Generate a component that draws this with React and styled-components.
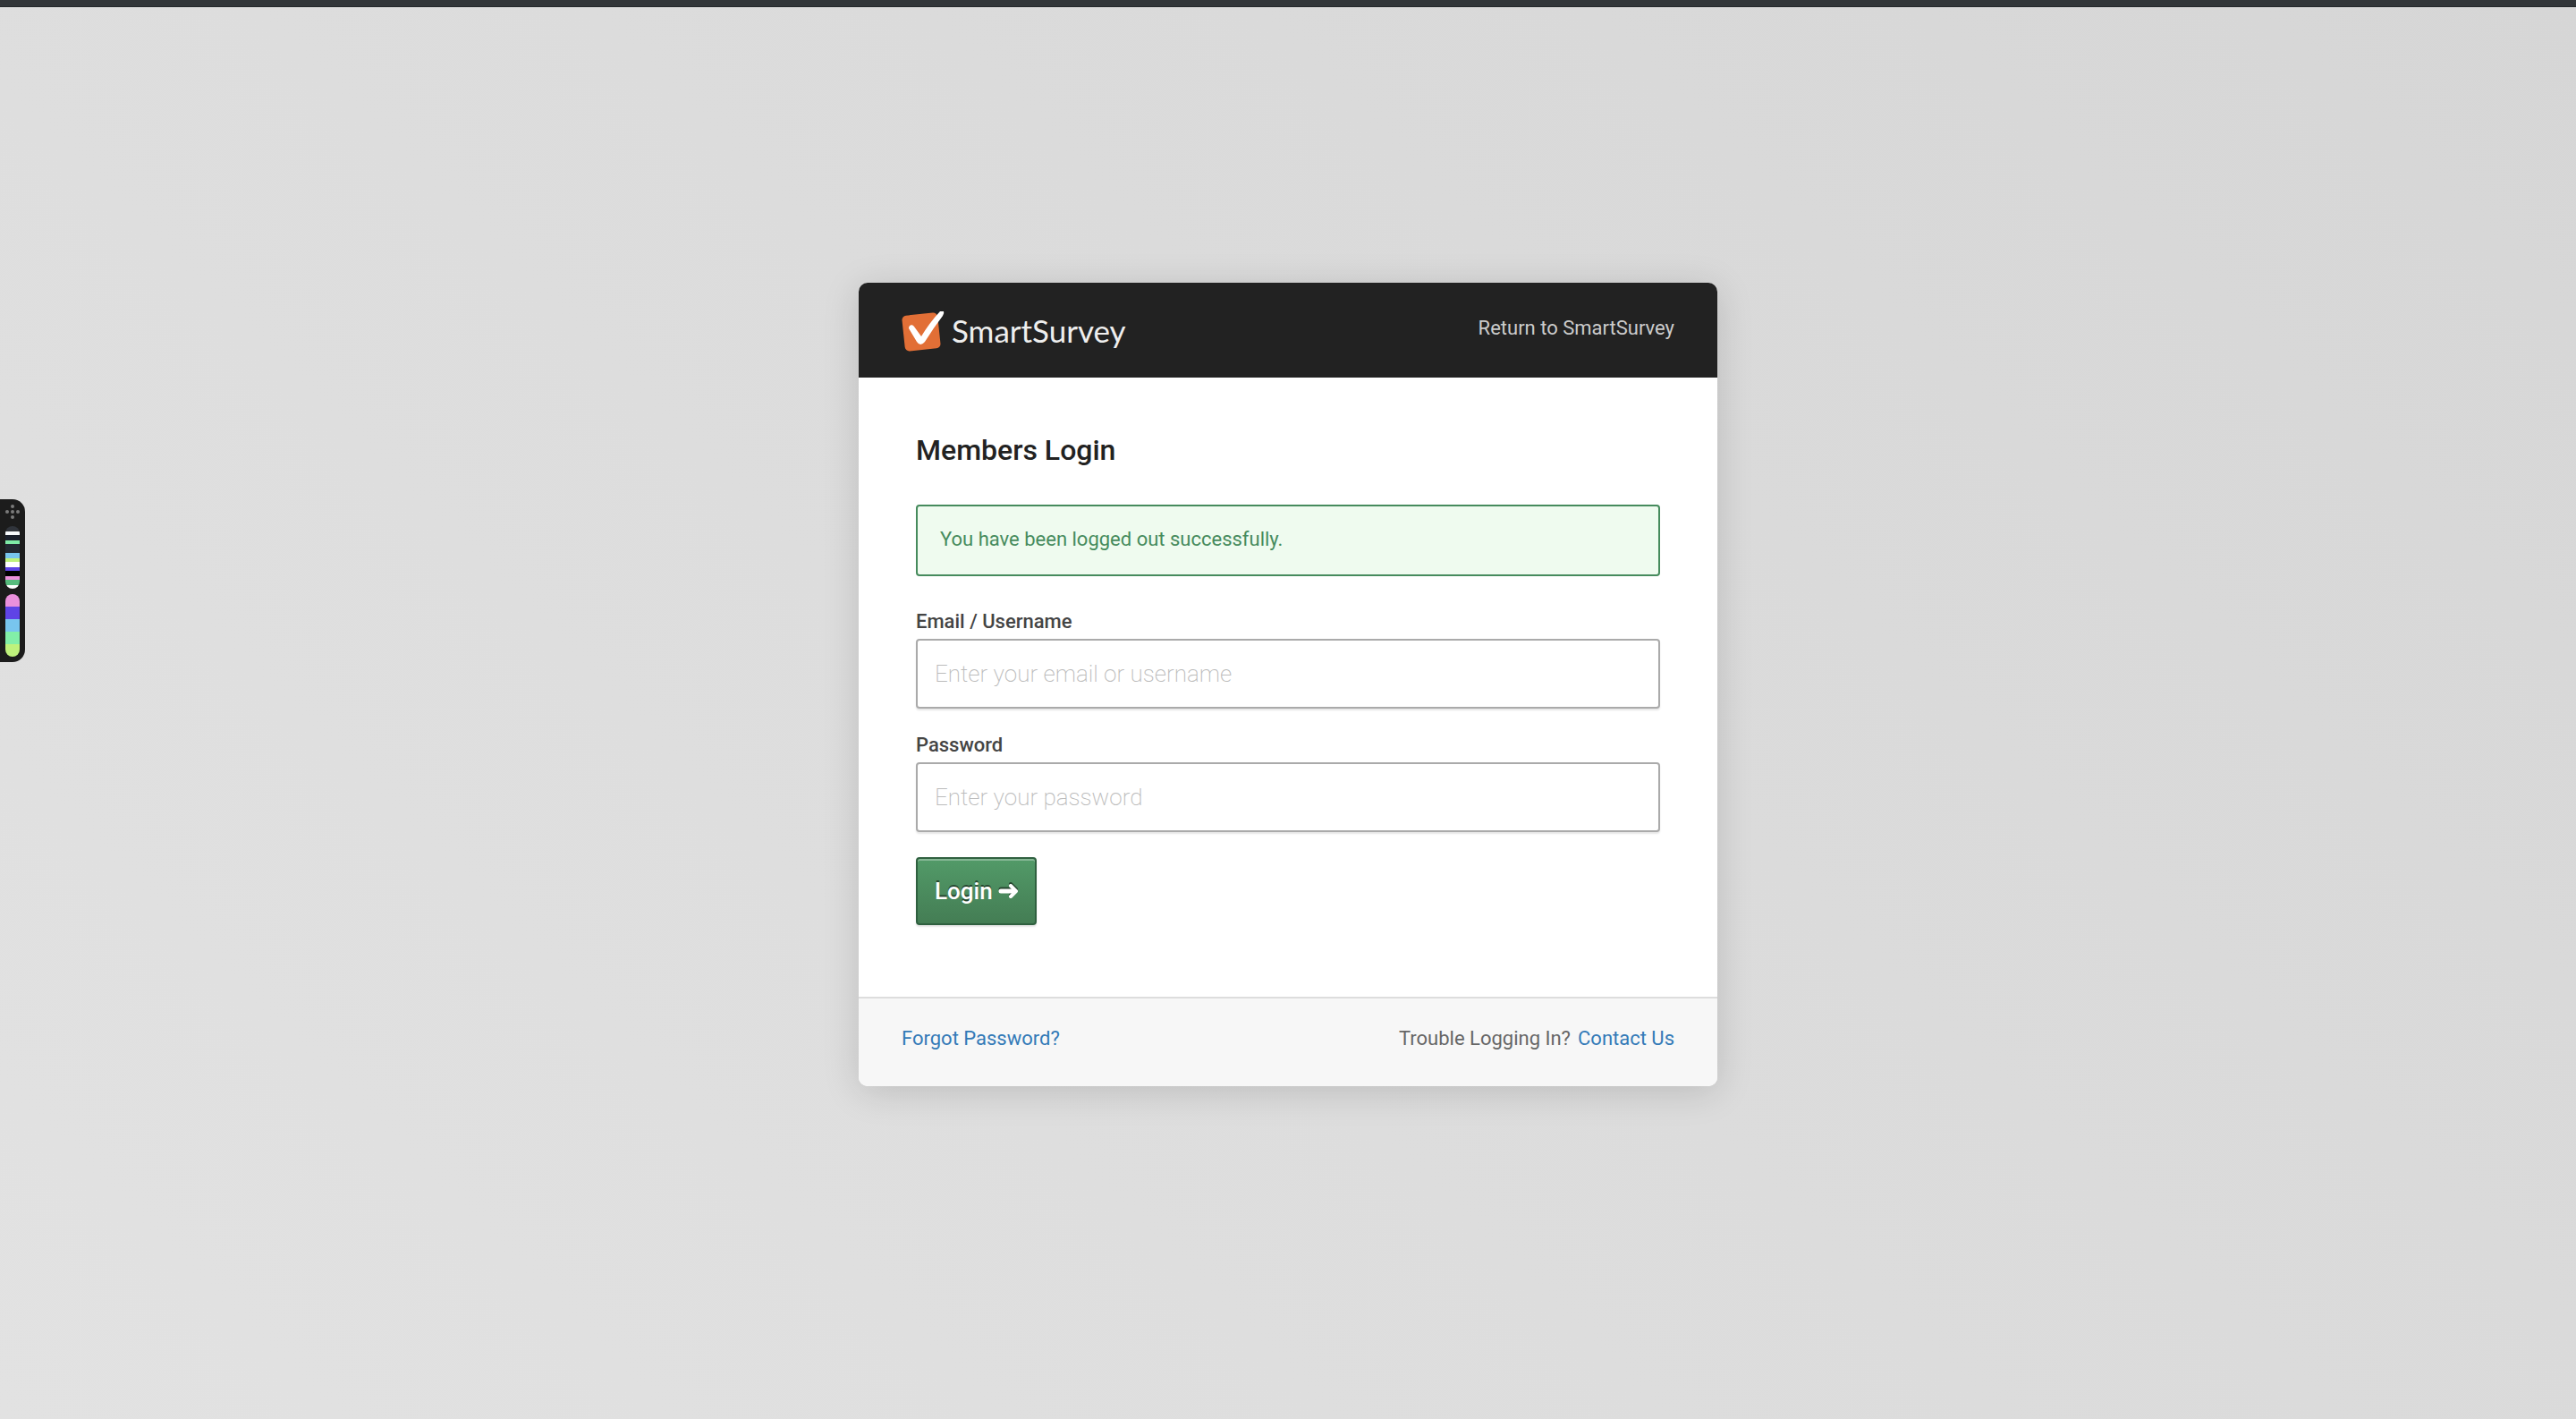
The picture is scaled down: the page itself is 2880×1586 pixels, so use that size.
import React from "react";
import styled, { createGlobalStyle } from "styled-components";

const GlobalStyle = createGlobalStyle`
  * { box-sizing: border-box; }
  body {
    margin: 0;
    font-family: Roboto, "Liberation Sans", sans-serif;
    color: #222;
    background: #ddd;
  }
`;

const Page = styled.div`
  min-height: 100vh;
  display: flex;
  flex-direction: column;
  background: linear-gradient(45deg, #e2e2e2, #d6d6d6);
`;

const TopBar = styled.div`
  height: 8px;
  background: #323639;
  border-bottom: 1px solid #24282a;
`;

const Main = styled.main`
  padding: 308px 24px 0;
`;

const Card = styled.section`
  width: 100%;
  max-width: 960px;
  margin: 0 auto;
  background: #fff;
  border-radius: 10px;
  overflow: hidden;
  box-shadow: 0 6px 40px rgba(0, 0, 0, 0.15);
`;

const Header = styled.header`
  display: flex;
  justify-content: space-between;
  align-items: flex-start;
  padding: 32px 48px 26px;
  background: #222;
`;

const LogoLink = styled.a`
  display: block;
  height: 48px;
  svg { display: block; }
`;

const ReturnLink = styled.a`
  font-size: 22px;
  line-height: 38px;
  color: #ccc;
  text-decoration: none;
`;

const Body = styled.div`
  padding: 56px 64px 80px;
`;

const Title = styled.h1`
  margin: 0 0 36px;
  font-size: 32px;
  line-height: 50px;
  font-weight: 500;
`;

const Notice = styled.p`
  margin: 0 0 32px;
  padding: 18px 25px 20px;
  border: 2px solid #468b5d;
  border-radius: 4px;
  background: #effbef;
  color: #468b5d;
  font-size: 22px;
  line-height: 38px;
`;

const Fields = styled.div`
  display: grid;
  gap: 22px;
  margin-bottom: 28px;
`;

const Field = styled.div`
  display: flex;
  flex-direction: column;
`;

const Label = styled.label`
  font-size: 22px;
  line-height: 38px;
  font-weight: 500;
  color: #444;
`;

const Input = styled.input`
  height: 78px;
  padding: 0 19px;
  border: 2px solid #aaa;
  border-radius: 4px;
  box-shadow: 0 2px 2px rgba(0, 0, 0, 0.1);
  background: #fff;
  color: #222;
  font: 200 26px Roboto, sans-serif;
  &::placeholder { color: #bbb; opacity: 1; }
`;

const LoginButton = styled.button`
  display: inline-flex;
  align-items: center;
  gap: 6px;
  height: 76px;
  padding: 0 19px;
  border: 2px solid #2f603f;
  border-radius: 4px;
  background: linear-gradient(#529a68, #447d54);
  box-shadow: inset 0 2px 0 rgba(255, 255, 255, 0.3), 0 2px 2px rgba(0, 0, 0, 0.1);
  color: #fff;
  font: 500 26px Roboto, sans-serif;
  text-shadow: 0 -2px 0 rgba(0, 0, 0, 0.5);
  svg {
    overflow: visible;
    filter: drop-shadow(0 -2px 0 rgba(0, 0, 0, 0.5));
  }
`;

const Footer = styled.footer`
  display: flex;
  justify-content: space-between;
  padding: 26px 48px 34px;
  border-top: 2px solid #ddd;
  background: #f7f7f7;
  font-size: 22px;
  line-height: 38px;
  color: #666;
`;

const Help = styled.p`
  display: flex;
  gap: 8px;
  margin: 0;
`;

const FooterLink = styled.a`
  color: #337ab7;
  text-decoration: none;
`;

const Widget = styled.aside`
  position: fixed;
  left: 0;
  top: 558px;
  width: 28px;
  display: flex;
  flex-direction: column;
  align-items: center;
  gap: 6px;
  padding: 6px 0;
  border-radius: 0 14px 14px 0;
  background: #1c1c1c;
`;

const Handle = styled.svg`
  width: 16px;
  height: 18px;
  fill: #7b7b7b;
`;

const Pill = styled.div`
  width: 16px;
  display: flex;
  flex-direction: column;
  border-radius: 8px;
  overflow: hidden;
`;

const Band = styled.span`
  height: ${(p) => p.$size}px;
  background: ${(p) => p.$color};
`;

const palette = [
  ["#30343b", 6], ["#f7fafc", 4], ["#1a202c", 6], ["#7eeaa6", 4], ["#232933", 10],
  ["#78c5ee", 6], ["#bff27c", 4], ["#ffffff", 6], ["#5f44e6", 4], ["#000000", 6],
  ["#ea90dc", 4], ["#56bb7c", 6], ["#ffffff", 4],
];
const accents = [
  ["#ea90dc", 14], ["#5f44e6", 14], ["#78c5ee", 14], ["#82efa8", 14], ["#bff27c", 14],
];

function Bands({ items }) {
  return (
    <Pill>
      {items.map(([color, size], i) => <Band key={i} $color={color} $size={size} />)}
    </Pill>
  );
}

function Logo() {
  return (
    <svg width="254" height="48" viewBox="0 0 254 48" aria-label="SmartSurvey" role="img">
      <rect x="2" y="3" width="40" height="40" rx="5" fill="#e26f36" transform="rotate(-6 22 23)" />
      <path d="M8 19C8 15 12 14 14 17L22 28Q31 13 43 0L47 0Q48 2 46 5Q36 18 26 34Q21 40 17 34Z" fill="#fff" />
      <text x="56" y="35" fill="#eee" fontFamily="Lato, sans-serif" fontSize="35">SmartSurvey</text>
    </svg>
  );
}

export default function App() {
  return (
    <Page>
      <GlobalStyle />
      <TopBar />
      <Main>
        <Card>
          <Header>
            <LogoLink href="#home"><Logo /></LogoLink>
            <ReturnLink href="#home">Return to SmartSurvey</ReturnLink>
          </Header>
          <form onSubmit={(e) => e.preventDefault()}>
            <Body>
              <Title>Members Login</Title>
              <Notice role="status">You have been logged out successfully.</Notice>
              <Fields>
                <Field>
                  <Label htmlFor="username">Email / Username</Label>
                  <Input id="username" type="text" placeholder="Enter your email or username" />
                </Field>
                <Field>
                  <Label htmlFor="password">Password</Label>
                  <Input id="password" type="password" placeholder="Enter your password" />
                </Field>
              </Fields>
              <LoginButton type="submit">
                Login
                <svg width="22" height="18" viewBox="0 0 22 18" fill="none" stroke="#fff" strokeLinecap="round" aria-hidden="true">
                  <path d="M3 9H17" strokeWidth="5" />
                  <path d="M14 3L20 9L14 15" strokeWidth="4" strokeLinejoin="round" />
                </svg>
              </LoginButton>
            </Body>
          </form>
          <Footer>
            <FooterLink href="#forgot">Forgot Password?</FooterLink>
            <Help>
              Trouble Logging In? <FooterLink href="#contact">Contact Us</FooterLink>
            </Help>
          </Footer>
        </Card>
      </Main>
      <Widget>
        <Handle viewBox="0 0 16 18" aria-hidden="true">
          <circle cx="8" cy="2" r="2" />
          <circle cx="2" cy="8" r="2" />
          <circle cx="8" cy="8" r="2" />
          <circle cx="14" cy="8" r="2" />
          <circle cx="8" cy="14" r="2" />
        </Handle>
        <Bands items={palette} />
        <Bands items={accents} />
      </Widget>
    </Page>
  );
}
